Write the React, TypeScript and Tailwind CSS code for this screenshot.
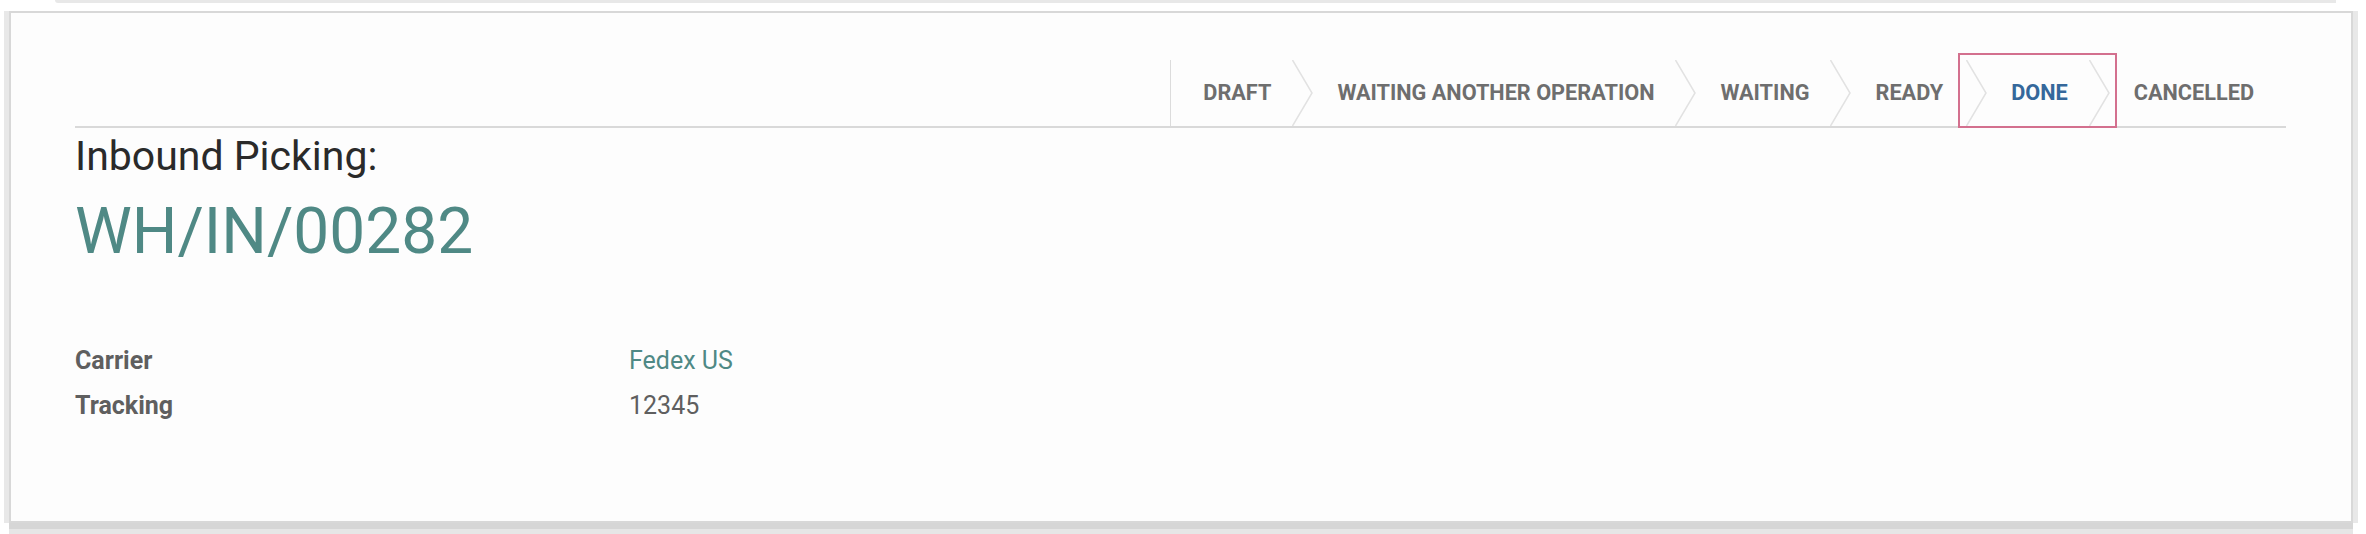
import React from "react";

function Chevron() {
  return (
    <svg width="21" height="66" viewBox="0 0 21 66" className="shrink-0 block">
      <polyline points="0.5,0 20,33 0.5,66" fill="none" stroke="#e2e2e2" strokeWidth="1.5" />
    </svg>
  );
}

export default function App() {
  return (
    <div
      className="w-[2366px] h-[534px] bg-white overflow-hidden flex flex-col"
      style={{ fontFamily: "Roboto, 'Noto Sans', 'Liberation Sans', sans-serif" }}
    >
      <div className="h-[3px] ml-[55px] mr-[30px] bg-[#e8e8e8] rounded-bl-[40px]" />
      <div className="pt-[8px] pl-[9px]">
        <div className="w-[2344px] h-[512px] bg-[#fdfdfd] border-2 border-[#d8d8d8] pt-[47px] pl-[64px] pr-[65px] shadow-[0_6px_0_#d6d6d6,0_11px_0_#e6e6e6,-5px_0_0_#e8e8e8,5px_0_0_#e8e8e8]">
          {/* Status bar */}
          <div className="flex justify-end items-stretch h-[68px] border-b-2 border-[#d9d9d9] text-[21.7px] font-bold uppercase leading-none text-[#6e6e6e]">
            <div className="w-px bg-[#dcdcdc]" />
            <div className="flex items-center pl-[32px] pr-[21px]">Draft</div>
            <Chevron />
            <div className="flex items-center pl-[24px] pr-[21px]">Waiting Another Operation</div>
            <Chevron />
            <div className="flex items-center pl-[24px] pr-[21px]">Waiting</div>
            <Chevron />
            <div className="flex items-center pl-[24px] pr-[15px]">Ready</div>
            <div className="flex items-stretch -mt-[7px] -mb-[2px] border-2 border-[#d3708e] pt-[5px] pl-[6px] pr-[5px] relative">
              <div className="flex items-stretch h-[66px]">
                <Chevron />
                <div className="flex items-center pl-[24px] pr-[21px] text-[#35689b]">Done</div>
                <Chevron />
              </div>
            </div>
            <div className="flex items-center pl-[17px] pr-[32px]">Cancelled</div>
          </div>

          {/* Title */}
          <div className="mt-[4px] text-[41px] leading-[48px] text-[#2a2a2a]">Inbound Picking:</div>
          <div className="mt-[14px] text-[64px] leading-[76px] text-[#4f8985]">WH/IN/00282</div>

          {/* Fields */}
          <div className="mt-[68px] grid grid-cols-[554px_1fr] text-[25px] leading-[45px]">
            <div className="font-bold text-[#5f5f5f]">Carrier</div>
            <div className="text-[#4f8985]">Fedex US</div>
            <div className="font-bold text-[#5f5f5f]">Tracking</div>
            <div className="text-[#5f5f5f]">12345</div>
          </div>
        </div>
      </div>
    </div>
  );
}
